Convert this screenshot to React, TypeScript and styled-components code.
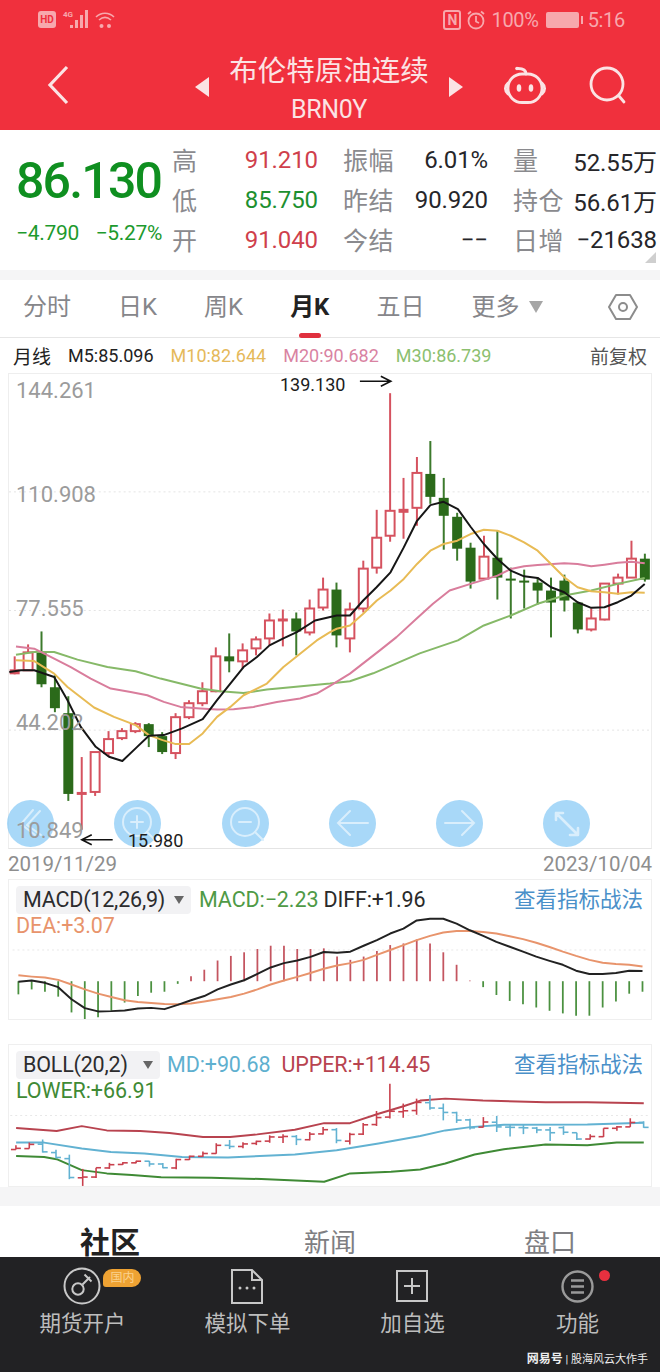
import { FC } from "react";
import styled, { createGlobalStyle } from "styled-components";

const FONT = `Roboto, "Noto Sans CJK SC", sans-serif`;

type Point = [number, number];

// open, close, high, low in page pixels of the main chart
const CANDLES: [number, number, number, number][] = [
    [674, 669, 656, 674], [670, 652, 644, 670], [651, 684, 631, 687], [687, 708, 675, 712],
    [713, 794, 696, 801], [795, 792, 757, 830], [792, 752, 752, 796], [753, 739, 731, 757],
    [738, 731, 728, 740], [731, 724, 722, 733], [724, 736, 723, 747], [736, 752, 732, 754],
    [753, 717, 713, 759], [717, 703, 700, 719], [703, 691, 682, 706], [691, 656, 647, 692],
    [656, 661, 633, 672], [661, 650, 643, 668], [648, 639, 636, 655], [638, 620, 613, 645],
    [621, 618, 609, 646], [618, 631, 612, 655], [632, 608, 599, 635], [607, 589, 577, 610],
    [589, 635, 582, 647], [638, 609, 602, 652], [608, 568, 560, 612], [567, 537, 509, 573],
    [535, 510, 392, 541], [512, 508, 477, 538], [507, 472, 456, 525], [473, 496, 440, 503],
    [497, 515, 477, 549], [516, 548, 512, 560], [547, 581, 542, 588], [578, 556, 535, 579],
    [557, 577, 530, 599], [578, 579, 567, 618], [580, 581, 569, 608], [582, 590, 577, 604],
    [590, 602, 577, 637], [580, 600, 574, 611], [602, 629, 602, 633], [629, 618, 608, 631],
    [619, 583, 583, 620], [583, 577, 573, 594], [577, 558, 540, 577], [558, 579, 553, 581],
];

const candleX = (i: number) => 13.7 + 13.45 * i;

const zoomA = (list: Point[]): Point[] => list.map(([x, y]) => [x / 3, 620 + y / 3]);
const zoomB = (list: Point[]): Point[] => list.map(([x, y]) => [330 + x / 3, 370 + y / 3]);

const M5: Point[] = [
    ...zoomA([[25, 155], [60, 150], [100, 150], [160, 170], [200, 240], [240, 320], [285, 380], [325, 410], [365, 423], [405, 385], [445, 347], [490, 345], [545, 325], [607, 297], [650, 240], [690, 190], [730, 140], [770, 110], [808, 75], [848, 55], [890, 35], [945, 0]]),
    ...zoomB([[20, 735], [60, 735], [100, 690], [140, 650], [182, 605], [222, 530], [262, 450], [302, 403], [342, 393], [385, 415], [423, 468], [463, 520], [504, 565], [544, 600], [584, 617], [625, 622], [665, 650], [705, 665], [745, 695], [786, 712], [826, 710], [866, 695], [907, 675], [947, 640]]),
];
const M10: Point[] = [
    ...zoomA([[45, 120], [100, 122], [160, 160], [200, 200], [280, 262], [340, 290], [405, 315], [445, 345], [486, 360], [526, 372], [566, 372], [607, 340], [650, 290], [690, 260], [730, 225], [800, 190], [850, 140], [900, 100], [950, 60], [990, 35]]),
    ...zoomB([[20, 775], [60, 765], [100, 730], [141, 690], [182, 660], [222, 625], [262, 580], [302, 540], [342, 520], [383, 510], [423, 490], [463, 477], [504, 480], [544, 495], [584, 515], [625, 540], [665, 580], [705, 620], [745, 650], [786, 662], [826, 665], [866, 670], [907, 665], [947, 667]]),
];
const M20: Point[] = [
    ...zoomA([[45, 78], [100, 85], [160, 115], [210, 140], [270, 175], [330, 205], [390, 215], [440, 225], [490, 245], [540, 260], [600, 265], [650, 268], [700, 267], [760, 260], [830, 245], [900, 235], [950, 220], [990, 197]]),
    ...zoomB([[60, 910], [150, 840], [200, 800], [260, 745], [310, 700], [360, 660], [423, 640], [463, 628], [504, 615], [544, 595], [584, 587], [625, 583], [705, 578], [745, 580], [786, 587], [826, 582], [866, 576], [907, 573], [947, 578]]),
];
const M30: Point[] = [
    ...zoomA([[45, 103], [100, 95], [160, 95], [230, 118], [320, 140], [405, 153], [480, 175], [540, 190], [600, 205], [660, 213], [730, 218], [800, 208], [880, 200], [990, 190]]),
    ...zoomB([[60, 933], [130, 909], [200, 879], [270, 849], [385, 810], [463, 765], [544, 735], [625, 700], [705, 675], [786, 660], [866, 640], [947, 622]]),
];

const toPoints = (list: Point[]) => list.map(([x, y]) => `${x.toFixed(1)},${y.toFixed(1)}`).join(" ");

const MACD_BARS = [360, 345, 352, 367, 415, 437, 430, 410, 385, 365, 355, 352, 328, 305, 285, 257, 243, 232, 222, 212, 212, 222, 222, 220, 245, 255, 245, 228, 210, 205, 193, 205, 232, 270, 318, 338, 362, 380, 390, 400, 410, 418, 425, 425, 400, 382, 358, 352];
const DIFF = [322, 318, 325, 338, 375, 402, 412, 411, 409, 403, 401, 405, 392, 378, 365, 345, 330, 317, 298, 278, 265, 257, 246, 231, 233, 230, 212, 195, 175, 160, 135, 130, 130, 145, 165, 182, 200, 215, 230, 245, 258, 270, 288, 298, 298, 295, 288, 289];
const DEA = [302, 306, 309, 316, 330, 345, 358, 368, 378, 383, 386, 389, 390, 388, 382, 375, 368, 358, 345, 330, 318, 307, 295, 282, 272, 265, 255, 240, 225, 210, 195, 182, 172, 167, 167, 170, 175, 183, 192, 203, 216, 230, 243, 255, 264, 268, 270, 275];

const macdX = (i: number) => 13.9 + 13.47 * i;
const macdY = (z: number) => 875 + z / 3;
const macdLine = (list: number[]) => toPoints(list.map((z, i): Point => [macdX(i), macdY(z)]));

const bollZoom = (list: Point[]) => toPoints(list.map(([x, y]): Point => [x / 2.376, 1035 + y / 3]));
const UPPER: Point[] = [[33, 278], [130, 287], [190, 272], [250, 285], [330, 287], [400, 293], [480, 305], [545, 305], [610, 297], [700, 283], [770, 263], [832, 263], [900, 235], [960, 212], [1000, 195], [1060, 189], [1150, 195], [1300, 200], [1400, 200], [1535, 203]];
const MIDDLE: Point[] = [[33, 322], [100, 322], [190, 340], [260, 350], [340, 355], [430, 365], [540, 367], [700, 358], [800, 345], [900, 325], [1000, 302], [1060, 285], [1120, 275], [1200, 268], [1400, 267], [1535, 262]];
const LOWER: Point[] = [[33, 362], [100, 365], [130, 372], [190, 405], [250, 415], [310, 420], [380, 427], [500, 428], [620, 432], [770, 440], [832, 415], [930, 410], [1000, 403], [1060, 385], [1130, 358], [1200, 342], [1300, 328], [1400, 330], [1470, 322], [1535, 322]];
const bollY = (y: number) => 1083 + (y - 392) * 0.235;

const PRICE_LABELS = [
    { text: "144.261", top: 5 },
    { text: "110.908", top: 109 },
    { text: "77.555", top: 223 },
    { text: "44.202", top: 337 },
    { text: "10.849", top: 445 },
];

const QUOTE_COLUMNS = [
    {
        width: 146, rows: [
            ["高", "91.210", "#cf3f4c"],
            ["低", "85.750", "#1d9030"],
            ["开", "91.040", "#cf3f4c"],
        ]
    },
    {
        width: 145, rows: [
            ["振幅", "6.01%", "#26262a"],
            ["昨结", "90.920", "#26262a"],
            ["今结", "−−", "#26262a"],
        ]
    },
    {
        width: 144, rows: [
            ["量", "52.55万", "#26262a"],
            ["持仓", "56.61万", "#26262a"],
            ["日增", "−21638", "#26262a"],
        ]
    },
];

const MainChart: FC = () => (
    <PlotSvg viewBox="8 373 644 475" width={644} height={475}>
        {[491, 610, 730].map(y => (
            <line key={y} x1={8} x2={652} y1={y} y2={y} stroke="#e4e4e4" strokeWidth={1} strokeDasharray="2 3" />
        ))}
        {CANDLES.map(([open, close, high, low], i) => {
            const x = candleX(i);
            const up = close < open;
            const top = Math.min(open, close);
            const height = Math.abs(open - close);
            const thin = height < 6;
            const colour = up ? "#d5525f" : "#3c7a2c";
            return (
                <g key={i}>
                    <line x1={x} x2={x} y1={high} y2={low} stroke={colour} strokeWidth={2} />
                    {thin ? (
                        <rect x={x - 5} y={top} width={10} height={Math.max(height, 2)} fill={up ? "#d5525f" : "#2b6a1a"} />
                    ) : up ? (
                        <rect x={x - 4.5} y={top} width={9} height={height} fill="#fff" stroke={colour} strokeWidth={2} />
                    ) : (
                        <rect x={x - 5} y={top} width={10} height={height} fill="#2b6a1a" />
                    )}
                </g>
            );
        })}
        <polyline points={toPoints(M30)} fill="none" stroke="#86b968" strokeWidth={2} strokeLinejoin="round" />
        <polyline points={toPoints(M20)} fill="none" stroke="#d97d9c" strokeWidth={2} strokeLinejoin="round" />
        <polyline points={toPoints(M10)} fill="none" stroke="#e8bb55" strokeWidth={2} strokeLinejoin="round" />
        <polyline points={toPoints(M5)} fill="none" stroke="#161616" strokeWidth={2} strokeLinejoin="round" />
        <path d="M360 380H390M381 375L391 380L381 385" fill="none" stroke="#111" strokeWidth={1.6} />
        <path d="M112 840H82M91 835L81 840L91 845" fill="none" stroke="#111" strokeWidth={1.6} />
    </PlotSvg>
);

const MacdPlot: FC = () => (
    <PlotSvg viewBox="8 879 644 141" width={644} height={141}>
        <line x1={8} x2={652} y1={950} y2={950} stroke="#e8e8e8" strokeDasharray="2 3" />
        {MACD_BARS.map((z, i) => (
            <line
                key={i}
                x1={macdX(i)}
                x2={macdX(i)}
                y1={macdY(320)}
                y2={macdY(z)}
                stroke={z < 320 ? "#c45560" : "#4b9140"}
                strokeWidth={1.8}
            />
        ))}
        <polyline points={macdLine(DEA)} fill="none" stroke="#e8946c" strokeWidth={2} strokeLinejoin="round" />
        <polyline points={macdLine(DIFF)} fill="none" stroke="#222" strokeWidth={2} strokeLinejoin="round" />
    </PlotSvg>
);

const BollPlot: FC = () => (
    <PlotSvg viewBox="8 1044 644 142" width={644} height={142}>
        <line x1={8} x2={652} y1={1115} y2={1115} stroke="#e8e8e8" strokeDasharray="2 3" />
        <polyline points={bollZoom(UPPER)} fill="none" stroke="#b8434f" strokeWidth={2} strokeLinejoin="round" />
        <polyline points={bollZoom(MIDDLE)} fill="none" stroke="#62b2d2" strokeWidth={2} strokeLinejoin="round" />
        <polyline points={bollZoom(LOWER)} fill="none" stroke="#3f8a35" strokeWidth={2} strokeLinejoin="round" />
        {CANDLES.map(([open, close, high, low], i) => {
            const x = candleX(i);
            const colour = close < open ? "#c9404d" : "#62b2d2";
            return (
                <g key={i} stroke={colour} strokeWidth={1.6}>
                    <line x1={x} x2={x} y1={bollY(high)} y2={bollY(low)} />
                    <line x1={x - 5} x2={x} y1={bollY(open)} y2={bollY(open)} />
                    <line x1={x} x2={x + 5} y1={bollY(close)} y2={bollY(close)} />
                </g>
            );
        })}
    </PlotSvg>
);

const ToolIcon: FC<{ kind: string }> = ({ kind }) => (
    <svg width={47} height={47} viewBox="0 0 47 47" fill="none" stroke="#d9eefc" strokeWidth={2} strokeLinecap="round">
        {kind === "back" && <path d="M26 10L14 24L28 35M33 11L20 25L34 35" />}
        {kind === "in" && <><circle cx={23} cy={22} r={14} /><path d="M23 16V28M17 22H29M33 32L41 40" /></>}
        {kind === "out" && <><circle cx={23} cy={22} r={14} /><path d="M17 22H29M33 32L41 40" /></>}
        {kind === "left" && <path d="M9 23H39M21 11L9 23L21 35" />}
        {kind === "right" && <path d="M9 23H38M26 11L38 23L26 35" />}
        {kind === "expand" && <path d="M13 13L33 33M13 13V20M13 13H20M35 35H27M35 35V28" strokeWidth={2.6} />}
    </svg>
);

const App: FC = () => (
    <Page>
        <GlobalStyle />
        <Header>
            <StatusBar>
                <StatusGroup>
                    <HdBadge>HD</HdBadge>
                    <NetworkTag>4G</NetworkTag>
                    <svg width={20} height={20} viewBox="0 0 20 20" fill="#f7a8ad">
                        <rect x={0} y={15} width={3} height={3} />
                        <rect x={5} y={10} width={3} height={8} />
                        <rect x={10} y={5} width={3} height={13} />
                        <rect x={15} y={0} width={3} height={18} />
                    </svg>
                    <svg width={20} height={18} viewBox="0 0 20 18" fill="none" stroke="#f7a8ad" strokeWidth={1.6}>
                        <path d="M1 6C6 1 14 1 19 6M4 9C8 5.500 12 5.500 16 9" />
                        <circle cx={6.500} cy={15} r={2} fill="#f7a8ad" stroke="none" />
                        <circle cx={14} cy={15} r={2} fill="#f7a8ad" stroke="none" />
                    </svg>
                </StatusGroup>
                <StatusGroup>
                    <NfcBadge>N</NfcBadge>
                    <svg width={20} height={20} viewBox="0 0 20 20" fill="none" stroke="#f7a8ad" strokeWidth={1.8}>
                        <circle cx={10} cy={11} r={7.500} />
                        <path d="M10 6V11.500L13 13M2 4L5 1.500M18 4L15 1.500" />
                    </svg>
                    <StatusText>100%</StatusText>
                    <BatteryBody />
                    <StatusText>5:16</StatusText>
                </StatusGroup>
            </StatusBar>
            <TitleBar>
                <svg width={22} height={40} viewBox="0 0 22 40" fill="none" stroke="#fbe3e4" strokeWidth={3.200}>
                    <path d="M20 2L3 20L20 38" />
                </svg>
                <TitleGroup>
                    <Arrow $dir="left" />
                    <TitleText>
                        <ContractName>布伦特原油连续</ContractName>
                        <ContractCode>BRN0Y</ContractCode>
                    </TitleText>
                    <Arrow $dir="right" />
                </TitleGroup>
                <HeaderActions>
                    <svg width={44} height={38} viewBox="0 0 44 38" fill="none" stroke="#fbe3e4" strokeWidth={2.800} strokeLinecap="round">
                        <circle cx={14} cy={2.500} r={1.800} fill="#fbe3e4" stroke="none" />
                        <path d="M15 2.500C21 2.500 23 4.500 23 8" />
                        <rect x={5} y={8} width={34} height={28.500} rx={14} />
                        <path d="M5 17C1.500 20 1.500 25 5 28M39 17C42.500 20 42.500 25 39 28" />
                        <ellipse cx={16} cy={22} rx={2.300} ry={3.800} fill="#fbe3e4" stroke="none" />
                        <ellipse cx={28} cy={22} rx={2.300} ry={3.800} fill="#fbe3e4" stroke="none" />
                    </svg>
                    <svg width={38} height={38} viewBox="0 0 38 38" fill="none" stroke="#fbe3e4" strokeWidth={2.800} strokeLinecap="round">
                        <circle cx={18} cy={18} r={16} />
                        <path d="M30 30L35 36" />
                    </svg>
                </HeaderActions>
            </TitleBar>
        </Header>

        <QuotePanel>
            <LastPrice>
                <PriceText>86.130</PriceText>
                <ChangeRow>
                    <span>−4.790</span>
                    <span>−5.27%</span>
                </ChangeRow>
            </LastPrice>
            {QUOTE_COLUMNS.map((col, i) => (
                <QuoteColumn key={i} $width={col.width}>
                    {col.rows.map(([label, value, colour]) => (
                        <QuoteCell key={label}>
                            <QuoteLabel>{label}</QuoteLabel>
                            <QuoteValue $colour={colour}>{value}</QuoteValue>
                        </QuoteCell>
                    ))}
                </QuoteColumn>
            ))}
            <CornerMark />
        </QuotePanel>

        <Divider $height={10} />

        <PeriodTabs>
            <PeriodTab>分时</PeriodTab>
            <PeriodTab>日K</PeriodTab>
            <PeriodTab>周K</PeriodTab>
            <PeriodTab $active>月K</PeriodTab>
            <PeriodTab>五日</PeriodTab>
            <MoreTab>更多<MoreCaret /></MoreTab>
            <SettingsIcon width={30} height={26} viewBox="0 0 30 26" fill="none" stroke="#8c8c8c" strokeWidth={2}>
                <path d="M8 1H22L29 13L22 25H8L1 13Z" strokeLinejoin="round" />
                <circle cx={15} cy={13} r={4} />
            </SettingsIcon>
        </PeriodTabs>

        <LegendRow>
            <PeriodName>月线</PeriodName>
            <LegendItem $colour="#222">M5:85.096</LegendItem>
            <LegendItem $colour="#e5b95a">M10:82.644</LegendItem>
            <LegendItem $colour="#d983a2">M20:90.682</LegendItem>
            <LegendItem $colour="#8cc06f">M30:86.739</LegendItem>
            <AdjustLabel>前复权</AdjustLabel>
        </LegendRow>

        <ChartFrame>
            <Stack>
                <LabelLayer>
                    {PRICE_LABELS.map(l => (
                        <PriceLabel key={l.text} $top={l.top}>{l.text}</PriceLabel>
                    ))}
                </LabelLayer>
                <MainChart />
                <LabelLayer>
                    <MarkText $left={271} $top={0}>139.130</MarkText>
                    <MarkText $left={119} $top={456}>15.980</MarkText>
                </LabelLayer>
                <ToolLayer>
                    <ToolButton><ToolIcon kind="back" /></ToolButton>
                    <ToolButton><ToolIcon kind="in" /></ToolButton>
                    <ToolButton><ToolIcon kind="out" /></ToolButton>
                    <ToolButton><ToolIcon kind="left" /></ToolButton>
                    <ToolButton><ToolIcon kind="right" /></ToolButton>
                    <ToolButton><ToolIcon kind="expand" /></ToolButton>
                </ToolLayer>
            </Stack>
        </ChartFrame>

        <DateRow>
            <span>2019/11/29</span>
            <span>2023/10/04</span>
        </DateRow>

        <IndicatorPanel $height={141}>
            <Stack>
                <MacdPlot />
                <IndicatorText>
                    <IndicatorLine>
                        <IndicatorChip $width={175}>MACD(12,26,9)<ChipCaret /></IndicatorChip>
                        <IndicatorValue $colour="#4f9a46" $left={8}>MACD:−2.23</IndicatorValue>
                        <IndicatorValue $colour="#2a2a2a" $left={5}>DIFF:+1.96</IndicatorValue>
                        <StrategyLink>查看指标战法</StrategyLink>
                    </IndicatorLine>
                    <IndicatorSecond $colour="#e8946c" $left={7}>DEA:+3.07</IndicatorSecond>
                </IndicatorText>
            </Stack>
        </IndicatorPanel>

        <PanelGap />

        <IndicatorPanel $height={143}>
            <Stack>
                <BollPlot />
                <IndicatorText>
                    <IndicatorLine>
                        <IndicatorChip $width={144}>BOLL(20,2)<ChipCaret /></IndicatorChip>
                        <IndicatorValue $colour="#5fb0cf" $left={7}>MD:+90.68</IndicatorValue>
                        <IndicatorValue $colour="#b8434f" $left={11}>UPPER:+114.45</IndicatorValue>
                        <StrategyLink>查看指标战法</StrategyLink>
                    </IndicatorLine>
                    <IndicatorSecond $colour="#3f8a35" $left={7}>LOWER:+66.91</IndicatorSecond>
                </IndicatorText>
            </Stack>
        </IndicatorPanel>

        <Divider $height={19} />

        <FeedTabs>
            <FeedTab $active>社区</FeedTab>
            <FeedTab>新闻</FeedTab>
            <FeedTab>盘口</FeedTab>
        </FeedTabs>

        <BottomNav>
            <NavItem>
                <NavIconWrap>
                    <svg width={38} height={38} viewBox="0 0 38 38" fill="none" stroke="#c8c8c8" strokeWidth={2}>
                        <circle cx={19} cy={19} r={17.500} />
                        <circle cx={15} cy={22} r={5.700} />
                        <path d="M19.500 17.500L27 10M21.500 7.500L28.500 14.500" />
                    </svg>
                    <RegionBadge>国内</RegionBadge>
                </NavIconWrap>
                <NavLabel>期货开户</NavLabel>
            </NavItem>
            <NavItem>
                <NavIconWrap>
                    <svg width={32} height={35} viewBox="0 0 32 35" fill="none" stroke="#c8c8c8" strokeWidth={2}>
                        <path d="M1 1H21L31 11V34H1Z" />
                        <path d="M21 1V11H31" />
                        <circle cx={9} cy={19} r={1.500} fill="#c8c8c8" stroke="none" />
                        <circle cx={16} cy={19} r={1.500} fill="#c8c8c8" stroke="none" />
                        <circle cx={23} cy={19} r={1.500} fill="#c8c8c8" stroke="none" />
                    </svg>
                </NavIconWrap>
                <NavLabel>模拟下单</NavLabel>
            </NavItem>
            <NavItem>
                <NavIconWrap>
                    <svg width={32} height={32} viewBox="0 0 32 32" fill="none" stroke="#c8c8c8" strokeWidth={2}>
                        <rect x={1} y={1} width={30} height={30} />
                        <path d="M16 8V24M8 16H24" />
                    </svg>
                </NavIconWrap>
                <NavLabel>加自选</NavLabel>
            </NavItem>
            <NavItem>
                <NavIconWrap>
                    <svg width={33} height={33} viewBox="0 0 33 33" fill="none" stroke="#9a9a9a" strokeWidth={2.400}>
                        <circle cx={16.500} cy={16.500} r={15} />
                        <path d="M10 10.500H23M10 16.500H23M10 22.500H23" />
                    </svg>
                    <NoticeDot />
                </NavIconWrap>
                <NavLabel>功能</NavLabel>
            </NavItem>
            <Watermark><strong>网易号</strong> | 股海风云大作手</Watermark>
        </BottomNav>
    </Page>
);

export default App;

const GlobalStyle = createGlobalStyle`
    html, body {
        margin: 0;
        padding: 0;
        background: #fff;
    }
    * {
        box-sizing: border-box;
    }
`;

const Page = styled.div`
    width: 660px;
    height: 1372px;
    overflow: hidden;
    font-family: ${FONT};
    background: #fff;
    display: flex;
    flex-direction: column;
`;

const Header = styled.header`
    height: 130px;
    background: #f0303d;
    flex: none;
`;

const StatusBar = styled.div`
    height: 39px;
    padding: 0 35px 0 38px;
    display: flex;
    align-items: center;
    justify-content: space-between;
`;

const StatusGroup = styled.div`
    display: flex;
    align-items: center;
    gap: 5px;
`;

const HdBadge = styled.span`
    width: 18px;
    height: 17px;
    border-radius: 3px;
    background: #f7a8ad;
    color: #f0303d;
    font-size: 10px;
    font-weight: 700;
    line-height: 17px;
    text-align: center;
`;

const NetworkTag = styled.span`
    margin-left: 2px;
    margin-right: -8px;
    align-self: flex-start;
    color: #f7a8ad;
    font-size: 8px;
    font-weight: 700;
`;

const NfcBadge = styled.span`
    width: 18px;
    height: 20px;
    border: 2px solid #f7a8ad;
    border-radius: 3px;
    color: #f7a8ad;
    font-size: 14px;
    font-weight: 700;
    line-height: 16px;
    text-align: center;
`;

const StatusText = styled.span`
    color: #f7a8ad;
    font-size: 20px;
    letter-spacing: -0.3px;
`;

const BatteryBody = styled.span`
    width: 33px;
    height: 16px;
    margin: 0 4px 0 2px;
    border-radius: 2px;
    background: #f7a8ad;
    position: relative;
    &::after {
        content: "";
        position: absolute;
        right: -4px;
        top: 4px;
        width: 2px;
        height: 8px;
        background: #f7a8ad;
    }
`;

const TitleBar = styled.div`
    height: 91px;
    padding: 0 33px 0 47px;
    display: grid;
    grid-template-columns: 1fr auto 1fr;
    align-items: center;
`;

const TitleGroup = styled.div`
    display: flex;
    align-items: center;
    gap: 19px;
    margin-left: -3px;
    margin-right: 13px;
`;

const TitleText = styled.div`
    width: 202px;
    margin-top: 11px;
    display: flex;
    flex-direction: column;
    align-items: center;
    color: #fbe3e4;
`;

const ContractName = styled.div`
    font-size: 28.5px;
    line-height: 38px;
    white-space: nowrap;
`;

const ContractCode = styled.div`
    margin-top: 2px;
    font-size: 25px;
    line-height: 34px;
    letter-spacing: -0.4px;
`;

const Arrow = styled.span<{ $dir: "left" | "right" }>`
    width: 0;
    height: 0;
    margin-top: 5px;
    border-top: 10px solid transparent;
    border-bottom: 10px solid transparent;
    ${props => props.$dir === "left" ? "border-right: 14px solid #fbe3e4;" : "border-left: 14px solid #fbe3e4;"}
`;

const HeaderActions = styled.div`
    display: flex;
    justify-content: flex-end;
    align-items: center;
    gap: 42px;
`;

const QuotePanel = styled.section`
    height: 140px;
    padding-top: 10px;
    display: flex;
    gap: 25px;
    position: relative;
    flex: none;
`;

const LastPrice = styled.div`
    width: 172px;
    margin-right: -25px;
    padding-left: 16px;
    flex: none;
    color: #0f8f20;
`;

const PriceText = styled.div`
    margin-top: 12px;
    font-size: 50px;
    line-height: 58px;
    font-weight: 500;
    letter-spacing: -1.800px;
`;

const ChangeRow = styled.div`
    margin-top: 10px;
    width: 146px;
    display: flex;
    justify-content: space-between;
    font-size: 21px;
    line-height: 26px;
    letter-spacing: -0.3px;
    color: #1d9a2e;
`;

const QuoteColumn = styled.div<{ $width: number }>`
    display: grid;
    grid-auto-rows: 40px;
    width: ${props => props.$width}px;
    flex: none;
`;

const QuoteCell = styled.div`
    display: flex;
    align-items: center;
    justify-content: space-between;
    white-space: nowrap;
`;

const QuoteLabel = styled.span`
    margin-top: -3px;
    color: #8a8a8e;
    font-size: 25px;
    letter-spacing: 0.5px;
`;

const QuoteValue = styled.span<{ $colour: string }>`
    color: ${props => props.$colour};
    font-size: 24px;
    letter-spacing: -0.1px;
`;

const CornerMark = styled.span`
    position: absolute;
    right: 4px;
    bottom: 7px;
    width: 0;
    height: 0;
    border-left: 11px solid transparent;
    border-bottom: 11px solid #cfcfcf;
`;

const Divider = styled.div<{ $height: number }>`
    height: ${props => props.$height}px;
    background: #f5f5f6;
    flex: none;
`;

const PeriodTabs = styled.nav`
    height: 58px;
    padding: 0 22px 4px 23px;
    display: flex;
    align-items: center;
    gap: 47px;
    border-bottom: 1px solid #e6e6e6;
    flex: none;
`;

const PeriodTab = styled.span<{ $active?: boolean }>`
    color: ${props => props.$active ? "#222" : "#86868a"};
    font-size: 24px;
    font-weight: ${props => props.$active ? 700 : 400};
    line-height: 32px;
    position: relative;
    ${props => props.$active && `
        &::after {
            content: "";
            position: absolute;
            left: 9px;
            bottom: -15px;
            width: 22px;
            height: 5px;
            border-radius: 3px;
            background: #e0303e;
        }
    `}
`;

const MoreTab = styled(PeriodTab)`
    display: flex;
    align-items: center;
    gap: 10px;
`;

const MoreCaret = styled.span`
    width: 0;
    height: 0;
    border-left: 7px solid transparent;
    border-right: 7px solid transparent;
    border-top: 12px solid #a6a6a6;
`;

const SettingsIcon = styled.svg`
    margin-left: auto;
`;

const LegendRow = styled.div`
    height: 35px;
    padding: 0 13px;
    display: flex;
    align-items: center;
    gap: 17px;
    flex: none;
`;

const LegendItem = styled.span<{ $colour: string }>`
    color: ${props => props.$colour};
    font-size: 18px;
    white-space: nowrap;
`;

const PeriodName = styled.span`
    color: #222;
    font-size: 19px;
`;

const AdjustLabel = styled.span`
    margin-left: auto;
    color: #555;
    font-size: 19px;
`;

const ChartFrame = styled.div`
    width: 644px;
    height: 476px;
    margin-left: 8px;
    border: 1px solid #eee;
    border-bottom-color: #e4e4e4;
    flex: none;
`;

const Stack = styled.div`
    display: grid;
    width: 100%;
    height: 100%;
    position: relative;
    & > * {
        grid-area: 1 / 1;
    }
`;

const PlotSvg = styled.svg`
    display: block;
    width: 100%;
    height: 100%;
`;

const LabelLayer = styled.div`
    position: relative;
`;

const PriceLabel = styled.span<{ $top: number }>`
    position: absolute;
    left: 7px;
    top: ${props => props.$top}px;
    color: #9b9b9b;
    font-size: 22px;
    line-height: 24px;
`;

const MarkText = styled.span<{ $left: number; $top: number }>`
    position: absolute;
    left: ${props => props.$left}px;
    top: ${props => props.$top}px;
    color: #1c1c1c;
    font-size: 18px;
    line-height: 22px;
`;

const ToolLayer = styled.div`
    align-self: end;
    height: 47px;
    margin: 0 0 1px -2px;
    display: flex;
    gap: 60.300px;
`;

const ToolButton = styled.span`
    width: 47px;
    height: 47px;
    border-radius: 50%;
    background: rgba(121, 195, 244, 0.65);
    flex: none;
`;

const DateRow = styled.div`
    height: 30px;
    padding: 0 8px;
    display: flex;
    align-items: center;
    justify-content: space-between;
    color: #8e8e8e;
    font-size: 20.500px;
    flex: none;
`;

const IndicatorPanel = styled.div<{ $height: number }>`
    width: 644px;
    height: ${props => props.$height}px;
    margin-left: 8px;
    border: 1px solid #efefef;
    flex: none;
`;

const IndicatorText = styled.div`
    padding-top: 6px;
    position: relative;
    font-size: 21.500px;
    line-height: 28px;
`;

const IndicatorLine = styled.div`
    padding: 0 8px 0 7px;
    display: flex;
    align-items: center;
`;

const IndicatorChip = styled.span<{ $width: number }>`
    width: ${props => props.$width}px;
    height: 28px;
    padding: 0 7px;
    border-radius: 4px;
    background: #f2f2f4;
    color: #2c2c2e;
    display: flex;
    align-items: center;
    justify-content: space-between;
    white-space: nowrap;
    letter-spacing: -0.2px;
`;

const ChipCaret = styled.span`
    width: 0;
    height: 0;
    border-left: 5.500px solid transparent;
    border-right: 5.500px solid transparent;
    border-top: 8px solid #666;
`;

const IndicatorValue = styled.span<{ $colour: string; $left: number }>`
    margin-left: ${props => props.$left}px;
    color: ${props => props.$colour};
    white-space: nowrap;
    letter-spacing: -0.1px;
`;

const IndicatorSecond = styled(IndicatorValue)`
    display: block;
    margin-top: -2px;
`;

const StrategyLink = styled.span`
    margin-left: auto;
    color: #4a90c9;
    font-size: 21.500px;
`;

const PanelGap = styled.div`
    height: 24px;
    flex: none;
`;

const FeedTabs = styled.nav`
    height: 51px;
    padding-top: 17px;
    display: grid;
    grid-template-columns: repeat(3, 1fr);
    justify-items: center;
    overflow: hidden;
    flex: none;
`;

const FeedTab = styled.span<{ $active?: boolean }>`
    color: ${props => props.$active ? "#222" : "#7e7e82"};
    font-size: ${props => props.$active ? 30 : 26}px;
    font-weight: ${props => props.$active ? 700 : 400};
    line-height: 40px;
`;

const BottomNav = styled.footer`
    height: 116px;
    padding-top: 10px;
    background: #222224;
    display: grid;
    grid-template-columns: repeat(4, 1fr);
    align-content: start;
    justify-items: center;
    position: relative;
    flex: none;
`;

const NavItem = styled.div`
    display: flex;
    flex-direction: column;
    align-items: center;
    gap: 2px;
`;

const NavIconWrap = styled.div`
    height: 38px;
    display: flex;
    align-items: center;
    position: relative;
`;

const NavLabel = styled.span`
    color: #bdbdbd;
    font-size: 21.500px;
    line-height: 34px;
`;

const RegionBadge = styled.span`
    position: absolute;
    left: 40px;
    top: 2px;
    width: 38px;
    height: 18px;
    border-radius: 9px 9px 9px 3px;
    background: #eea233;
    color: #fbd28e;
    font-size: 12px;
    line-height: 18px;
    text-align: center;
`;

const NoticeDot = styled.span`
    position: absolute;
    right: -16px;
    top: 3px;
    width: 11px;
    height: 11px;
    border-radius: 50%;
    background: #e8303f;
`;

const Watermark = styled.span`
    position: absolute;
    right: 12px;
    bottom: 4px;
    color: #eee;
    font-size: 11px;
    line-height: 18px;
    white-space: nowrap;
    strong {
        font-size: 12px;
        font-weight: 700;
    }
`;
